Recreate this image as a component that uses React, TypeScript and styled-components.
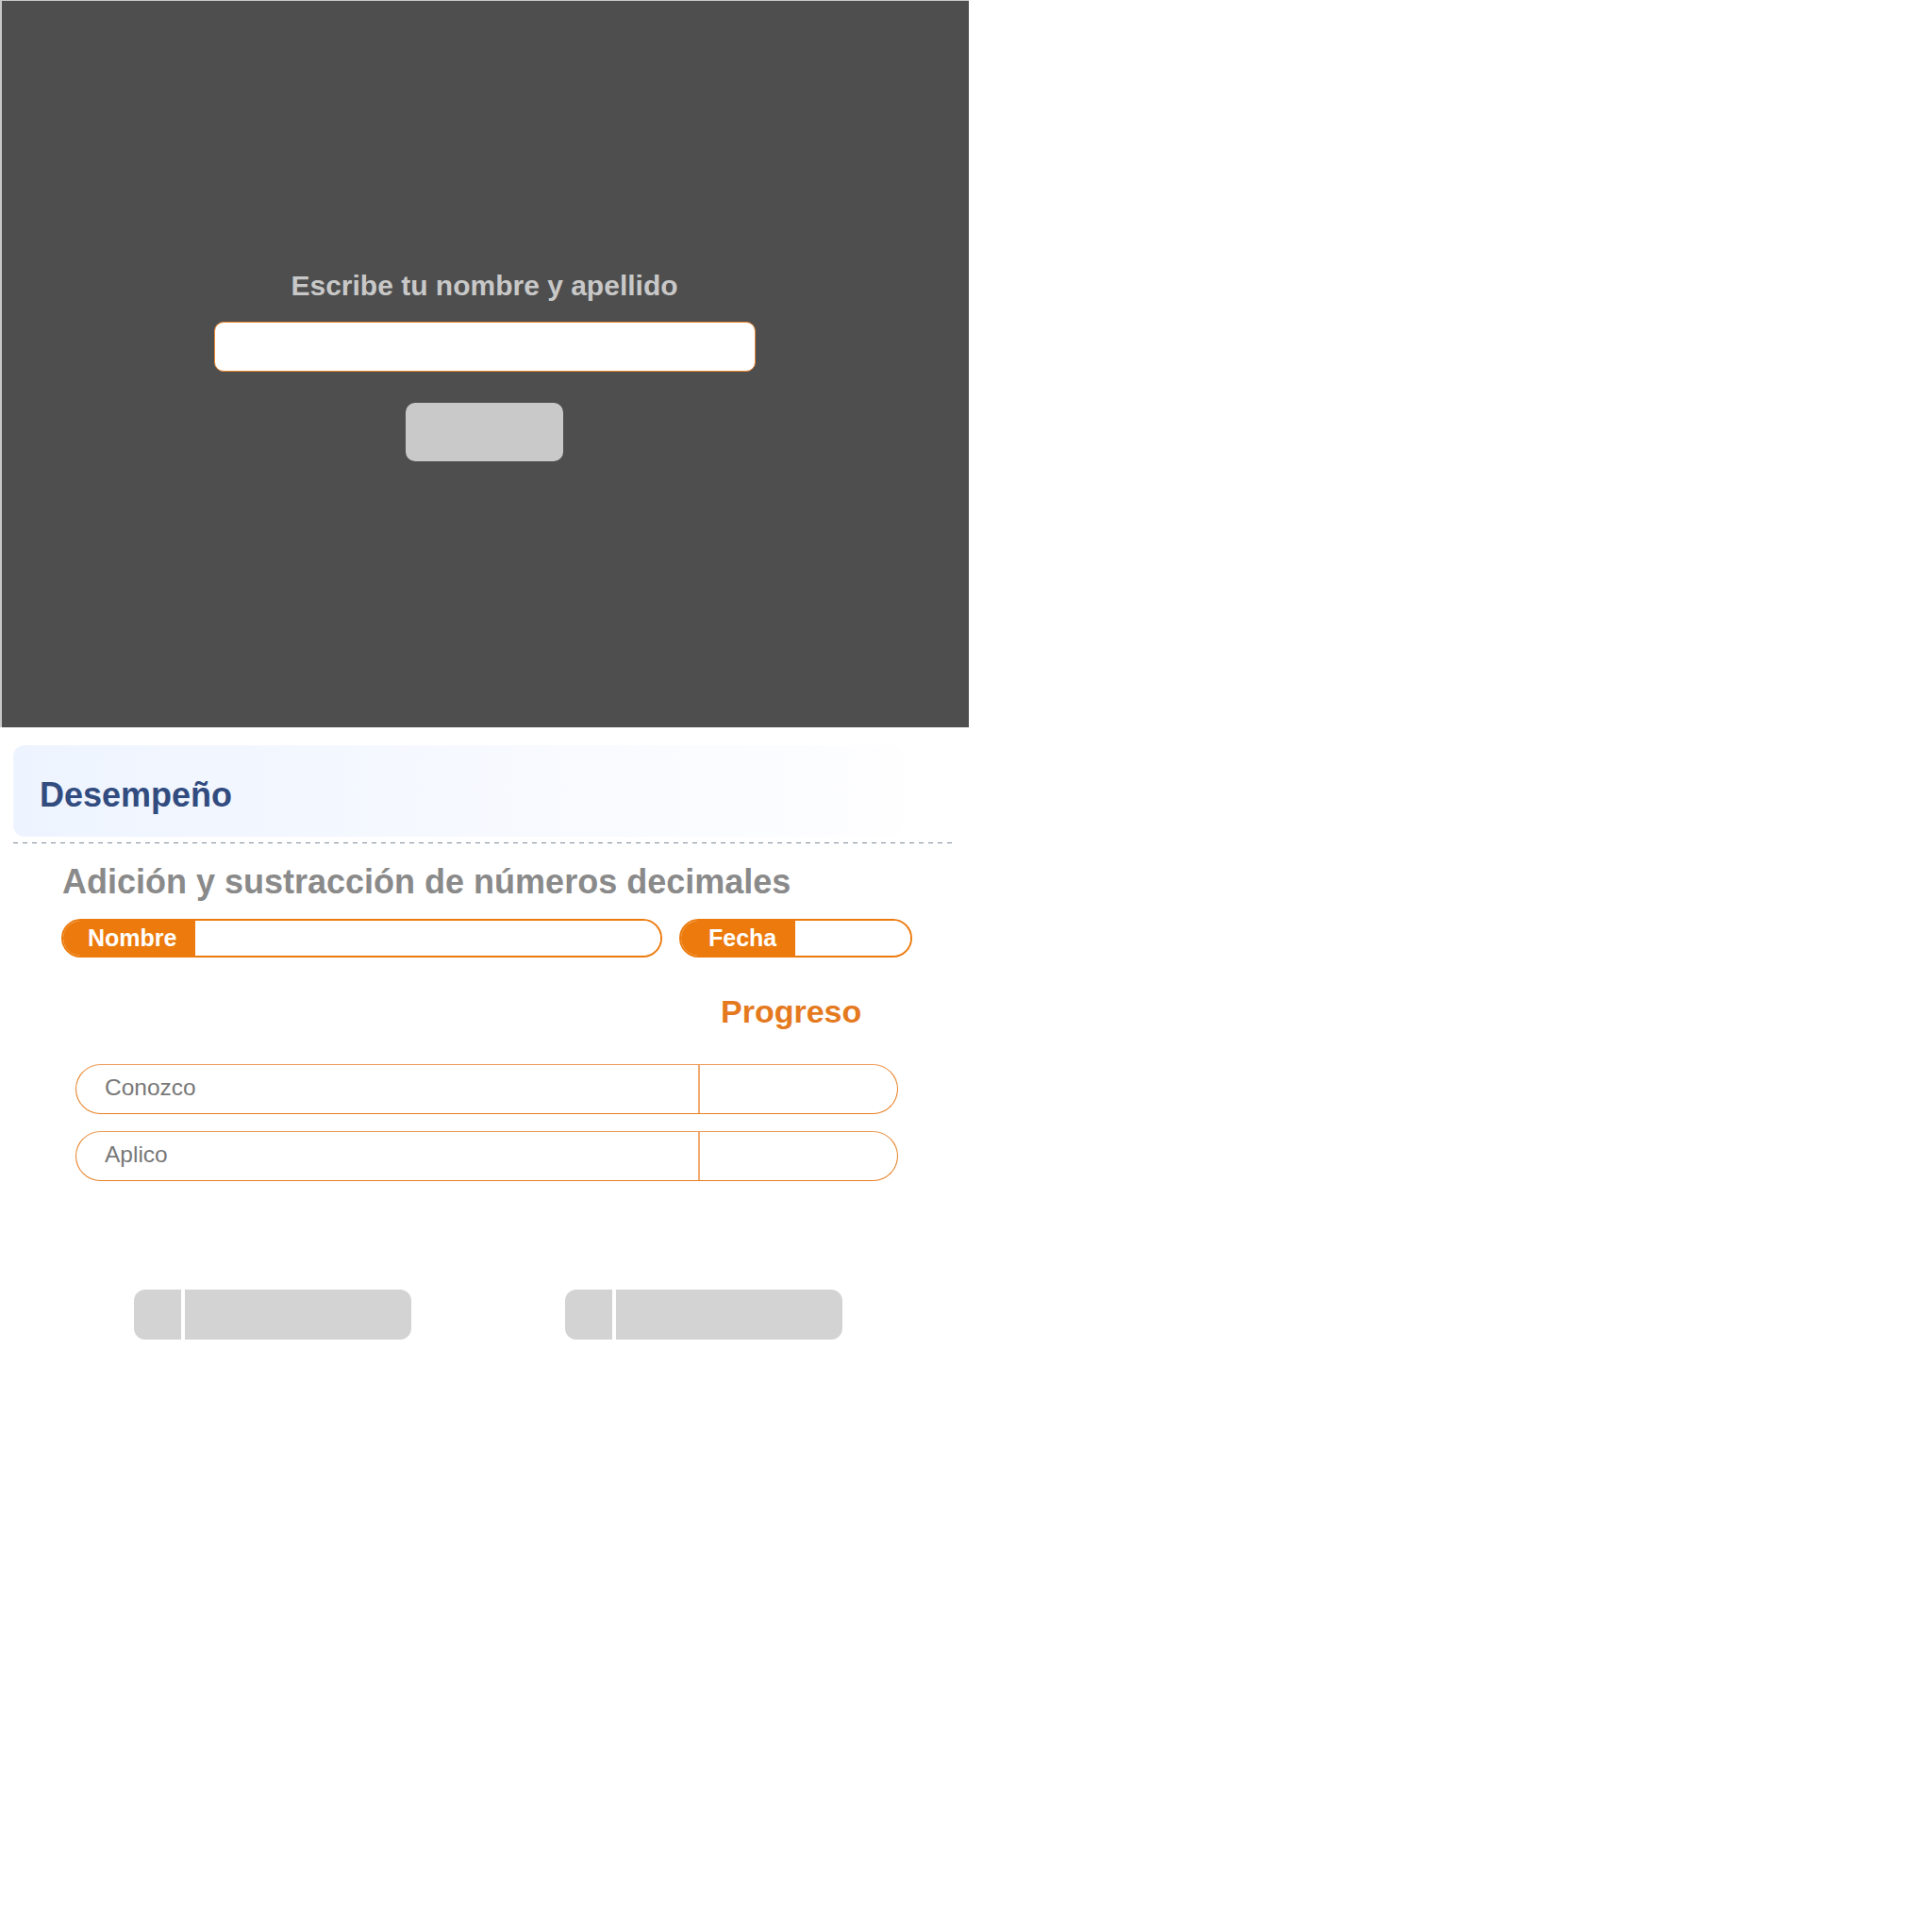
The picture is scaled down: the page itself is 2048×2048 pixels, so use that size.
import React from "react";
import styled, { createGlobalStyle } from "styled-components";

const GlobalStyle = createGlobalStyle`
  html, body {
    margin: 0;
    padding: 0;
    background: #ffffff;
    font-family: "Liberation Sans", Arial, sans-serif;
  }
`;

const ORANGE = "#ec7a0c";

const Page = styled.div`
  display: flex;
  flex-direction: column;
  align-items: flex-start;
`;

const LoginPanel = styled.section`
  box-sizing: content-box;
  width: 1023px;
  height: 768px;
  padding: 2px 2px 0 0;
  background: #4e4e4e;
  border-top: 1px solid #c8c8c8;
  border-left: 2px solid #c8c8c8;
  display: flex;
  flex-direction: column;
  align-items: center;
  justify-content: center;
`;

const Prompt = styled.h2`
  margin: 0;
  font-size: 30px;
  font-weight: 700;
  line-height: normal;
  color: #c8c8c8;
`;

const NameInput = styled.input`
  box-sizing: border-box;
  width: 574px;
  height: 53px;
  margin-top: 21px;
  border: 1px solid #e8862f;
  border-radius: 10px;
  background: #ffffff;
  outline: none;
  font: 24px "Liberation Sans", Arial, sans-serif;
`;

const SubmitButton = styled.button`
  width: 167px;
  height: 62px;
  margin-top: 33px;
  border: none;
  border-radius: 10px;
  background: #c9c9c9;
`;

const Report = styled.section`
  box-sizing: border-box;
  width: 1000px;
  margin: 19px 0 0 14px;
  display: flex;
  flex-direction: column;
`;

const HeaderBox = styled.header`
  box-sizing: border-box;
  width: 943px;
  height: 97px;
  padding: 32px 0 0 28px;
  border-radius: 12px;
  background: linear-gradient(to right, #eef4ff 0%, #f6f9ff 50%, #fefeff 100%);
`;

const HeaderTitle = styled.h1`
  margin: 0;
  font-size: 36px;
  font-weight: 700;
  line-height: normal;
  color: #324c80;
`;

const DashedRule = styled.div`
  margin-top: 6px;
  height: 1px;
  width: 100%;
  background: repeating-linear-gradient(
    to right,
    #7d8b9a 0px,
    #7d8b9a 5px,
    transparent 5px,
    transparent 10px
  );
`;

const Topic = styled.h2`
  margin: 20px 0 0 52px;
  font-size: 36px;
  font-weight: 700;
  line-height: normal;
  color: #8a8a8a;
`;

const PillRow = styled.div`
  display: flex;
  gap: 18px;
  margin: 18px 0 0 51px;
`;

const Pill = styled.div<{ $width: number }>`
  box-sizing: border-box;
  width: ${(p) => p.$width}px;
  height: 41px;
  border: 2px solid ${ORANGE};
  border-radius: 21px;
  overflow: hidden;
  display: flex;
`;

const PillLabel = styled.span<{ $padLeft: number }>`
  display: flex;
  align-items: center;
  padding: 0 20px 0 ${(p) => p.$padLeft}px;
  background: ${ORANGE};
  color: #ffffff;
  font-size: 25px;
  font-weight: 700;
`;

const PillField = styled.div`
  flex: 1;
  background: #ffffff;
`;

const ProgressHeading = styled.h3`
  margin: 38px 0 0 750px;
  font-size: 34px;
  font-weight: 700;
  line-height: normal;
  color: #e5791e;
`;

const ScoreList = styled.div`
  display: flex;
  flex-direction: column;
  gap: 18px;
  margin: 36px 0 0 66px;
`;

const ScoreRow = styled.div`
  box-sizing: border-box;
  width: 872px;
  height: 53px;
  border: 1px solid #e67f22;
  border-top-color: #ec9a55;
  border-radius: 27px;
  display: grid;
  grid-template-columns: 661px 1fr;
`;

const ScoreLabel = styled.div`
  display: flex;
  align-items: center;
  padding: 0 0 4px 30px;
  border-right: 2px solid #f0ab72;
  font-size: 24.5px;
  color: #787878;
`;

const ScoreValue = styled.div``;

const NavRow = styled.div`
  display: flex;
  gap: 163px;
  margin: 115px 0 0 128px;
`;

const NavButton = styled.button`
  display: flex;
  gap: 4px;
  width: 294px;
  height: 53px;
  padding: 0;
  border: none;
  background: transparent;
`;

const NavCap = styled.span`
  width: 50px;
  height: 100%;
  background: #d3d3d3;
  border-radius: 12px 0 0 12px;
`;

const NavBody = styled.span`
  flex: 1;
  height: 100%;
  background: #d3d3d3;
  border-radius: 0 12px 12px 0;
`;

export default function App() {
  return (
    <>
      <GlobalStyle />
      <Page>
        <LoginPanel>
          <Prompt>Escribe tu nombre y apellido</Prompt>
          <NameInput type="text" />
          <SubmitButton type="button" />
        </LoginPanel>
        <Report>
          <HeaderBox>
            <HeaderTitle>Desempeño</HeaderTitle>
          </HeaderBox>
          <DashedRule />
          <Topic>Adición y sustracción de números decimales</Topic>
          <PillRow>
            <Pill $width={637}>
              <PillLabel $padLeft={26}>Nombre</PillLabel>
              <PillField />
            </Pill>
            <Pill $width={247}>
              <PillLabel $padLeft={29}>Fecha</PillLabel>
              <PillField />
            </Pill>
          </PillRow>
          <ProgressHeading>Progreso</ProgressHeading>
          <ScoreList>
            {["Conozco", "Aplico"].map((label) => (
              <ScoreRow key={label}>
                <ScoreLabel>{label}</ScoreLabel>
                <ScoreValue />
              </ScoreRow>
            ))}
          </ScoreList>
          <NavRow>
            <NavButton type="button">
              <NavCap />
              <NavBody />
            </NavButton>
            <NavButton type="button">
              <NavCap />
              <NavBody />
            </NavButton>
          </NavRow>
        </Report>
      </Page>
    </>
  );
}
